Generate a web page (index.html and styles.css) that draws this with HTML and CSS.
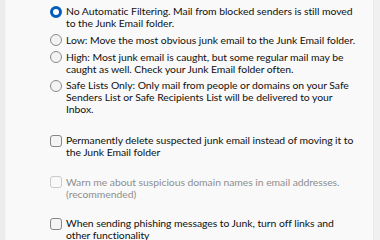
FILE: index.html
```html
<!DOCTYPE html>
<html>
<head>
<meta charset="utf-8">
<link rel="stylesheet" href="styles.css">
</head>
<body>
<div class="page">
  <div class="rail-left"></div>
  <div class="panel">
    <div class="group radios">
      <div class="option">
        <span class="radio checked"></span>
        <span class="label">No Automatic Filtering. Mail from blocked senders is still moved to the Junk Email folder.</span>
      </div>
      <div class="option">
        <span class="radio"></span>
        <span class="label">Low: Move the most obvious junk email to the Junk Email folder.</span>
      </div>
      <div class="option">
        <span class="radio"></span>
        <span class="label">High: Most junk email is caught, but some regular mail may be caught as well. Check your Junk Email folder often.</span>
      </div>
      <div class="option">
        <span class="radio"></span>
        <span class="label">Safe Lists Only: Only mail from people or domains on your Safe Senders List or Safe Recipients List will be delivered to your Inbox.</span>
      </div>
    </div>
    <div class="group checks">
      <div class="option">
        <span class="check"></span>
        <span class="label">Permanently delete suspected junk email instead of moving it to the Junk Email folder</span>
      </div>
      <div class="option disabled">
        <span class="check"></span>
        <span class="label">Warn me about suspicious domain names in email addresses. (recommended)</span>
      </div>
      <div class="option">
        <span class="check"></span>
        <span class="label">When sending phishing messages to Junk, turn off links and other functionality</span>
      </div>
    </div>
  </div>
  <div class="rail-right"></div>
</div>
</body>
</html>
```
FILE: styles.css
```css
html, body {
  margin: 0;
  padding: 0;
  height: 100%;
  overflow: hidden;
  background: #f9f9f9;
}
body {
  font-family: Lato, "Noto Sans", sans-serif;
  font-size: 10.4px;
  letter-spacing: -0.05px;
  color: #101010;
}
.page {
  display: flex;
  height: 100vh;
  overflow: hidden;
}
.rail-left {
  width: 5px;
  background: #ececec;
  border-right: 1px solid #f3f3f3;
}
.panel {
  flex: 1;
  min-height: 0;
  overflow: hidden;
  background: #f9f9f9;
  padding: 5px 17px 0 44px;
  display: flex;
  flex-direction: column;
  gap: 19px;
}
.rail-right {
  width: 6px;
  background: #f0f0f0;
  border-left: 1px solid #e9e9e9;
}
.group {
  display: flex;
  flex-direction: column;
  flex: none;
}
.radios {
  gap: 4.5px;
}
.checks {
  gap: 17.5px;
}
.option {
  display: flex;
  align-items: flex-start;
  gap: 4px;
  line-height: 12px;
}
.label {
  flex: 1;
}
.radio {
  flex: none;
  box-sizing: border-box;
  width: 12px;
  height: 12px;
  margin-top: 0.5px;
  border-radius: 50%;
  border: 1px solid #8a8a8a;
  background: #f3f3f3;
}
.radio.checked {
  border: 3.5px solid #005fb8;
  background: #ffffff;
}
.check {
  flex: none;
  box-sizing: border-box;
  width: 12px;
  height: 12px;
  margin-top: 0.5px;
  border-radius: 3px;
  border: 1px solid #868686;
  background: #f4f4f4;
}
.disabled {
  color: #8e8e8e;
}
.disabled .check {
  border-color: #cacaca;
  background: #f9f9f9;
}
```
